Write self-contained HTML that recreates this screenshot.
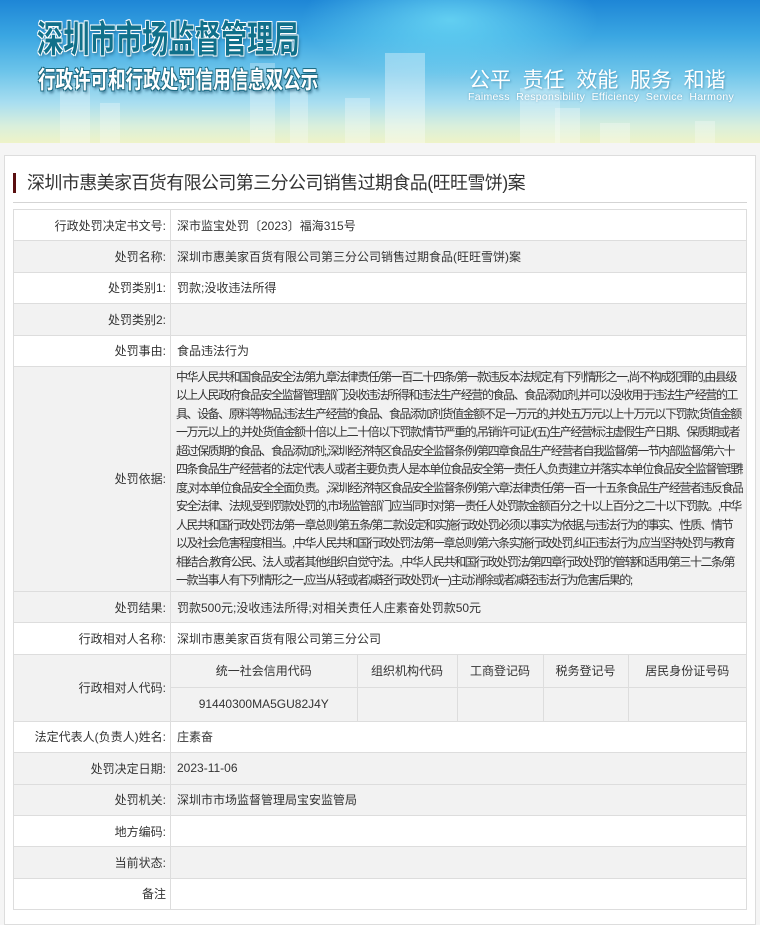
<!DOCTYPE html>
<html><head><meta charset="utf-8">
<style>
*{margin:0;padding:0;box-sizing:border-box}
body{width:760px;height:915px;background:#f5f5f5;font-family:"Liberation Sans","Noto Sans CJK SC",sans-serif;color:#333;overflow:hidden}
.banner{position:absolute;left:0;top:0;width:760px;height:143px;overflow:hidden;
background:linear-gradient(180deg,#1e86d6 0%,#3aa6e2 25%,#6cc4ea 50%,#a9def0 72%,#d9efdc 88%,#eef3c8 100%)}
.glow{position:absolute;left:300px;top:-40px;width:300px;height:120px;border-radius:50%;background:radial-gradient(ellipse,rgba(120,230,250,.7),rgba(120,230,250,0) 70%)}
.bld{position:absolute;bottom:0;background:rgba(255,255,255,.28)}
.t1{position:absolute;left:37px;top:9px;font-size:37px;font-weight:bold;color:#10708a;white-space:nowrap;transform:scaleX(0.71);transform-origin:0 0;
text-shadow:0 0 2px #fff,1px 1px 0 #fff,-1px -1px 0 #fff,1px -1px 0 #fff,-1px 1px 0 #fff,2px 3px 4px rgba(0,60,90,.5)}
.t2{position:absolute;left:38px;top:60px;font-size:24px;font-weight:bold;color:#fff;white-space:nowrap;transform:scaleX(0.73);transform-origin:0 0;
text-shadow:1px 1px 0 #1b6a82,-1px -1px 0 #1b6a82,1px -1px 0 #1b6a82,-1px 1px 0 #1b6a82,2px 3px 3px rgba(0,50,80,.5)}
.s1{position:absolute;left:469px;top:64px;font-size:21px;color:#fff;white-space:pre;text-shadow:1px 1px 2px rgba(0,80,120,.4)}
.s2{position:absolute;left:468px;top:91px;font-size:10.5px;letter-spacing:0.3px;color:#fff;white-space:pre;text-shadow:0 0 2px rgba(0,80,120,.4)}
.card{position:absolute;left:4px;top:155px;width:752px;height:770px;background:#fff;border:1px solid #ddd}
.bar{position:absolute;left:8px;top:17px;width:3px;height:20px;background:#5a0f10}
.title{position:absolute;left:22px;top:15px;font-size:18px;color:#333;letter-spacing:-0.6px;line-height:24px}
.sep{position:absolute;left:8px;top:46px;width:734px;height:1px;background:#d4d4d4}
table.main{position:absolute;left:8px;top:53px;width:734px;border-collapse:collapse;font-size:12px;color:#333;table-layout:fixed}
td{border:1px solid #ddd;height:31.4px;padding:0 6px;vertical-align:middle}
td.l{text-align:right;padding-right:4px}
tr.g td{background:#f2f2f2}
td.long{padding:1px 3px 1px 5px}
.lw{overflow:hidden;white-space:nowrap;line-height:18.5px;letter-spacing:-1.45px}
.inner{width:100%;border-collapse:collapse}
.inner td{border:none;border-right:1px solid #ddd;height:33px;text-align:center;padding:0}
.inner tr:first-child td{border-bottom:1px solid #ddd}
.inner td:last-child{border-right:none}
td.nop{padding:0;height:66px}
</style></head><body>
<div class="banner">
<div class="glow"></div>
<div class="bld" style="left:60px;width:30px;height:60px"></div>
<div class="bld" style="left:100px;width:20px;height:40px"></div>
<div class="bld" style="left:250px;width:25px;height:80px"></div>
<div class="bld" style="left:290px;width:18px;height:55px"></div>
<div class="bld" style="left:385px;width:40px;height:90px;background:rgba(255,255,255,.35)"></div>
<div class="bld" style="left:345px;width:25px;height:45px"></div>
<div class="bld" style="left:520px;width:40px;height:55px"></div>
<div class="bld" style="left:555px;width:25px;height:35px"></div>
<div class="bld" style="left:600px;width:30px;height:20px"></div>
<div class="bld" style="left:695px;width:20px;height:22px"></div>
<div class="t1">深圳市市场监督管理局</div>
<div class="t2">行政许可和行政处罚信用信息双公示</div>
<div class="s1">公平  责任  效能  服务  和谐</div>
<div class="s2">Faimess  Responsibility  Efficiency  Service  Harmony</div>
</div>
<div class="card">
<div class="bar"></div>
<div class="title">深圳市惠美家百货有限公司第三分公司销售过期食品(旺旺雪饼)案</div>
<div class="sep"></div>
<table class="main">
<colgroup><col style="width:157px"><col></colgroup>
<tr><td class="l">行政处罚决定书文号:</td><td>深市监宝处罚〔2023〕福海315号</td></tr>
<tr class="g"><td class="l">处罚名称:</td><td>深圳市惠美家百货有限公司第三分公司销售过期食品(旺旺雪饼)案</td></tr>
<tr><td class="l">处罚类别1:</td><td>罚款;没收违法所得</td></tr>
<tr class="g"><td class="l">处罚类别2:</td><td></td></tr>
<tr><td class="l">处罚事由:</td><td>食品违法行为</td></tr>
<tr class="g"><td class="l">处罚依据:</td><td class="long"><div class="lw">中华人民共和国食品安全法/第九章法律责任/第一百二十四条/第一款违反本法规定,有下列情形之一,尚不构成犯罪的,由县级<br>以上人民政府食品安全监督管理部门没收违法所得和违法生产经营的食品、食品添加剂,并可以没收用于违法生产经营的工<br>具、设备、原料等物品;违法生产经营的食品、食品添加剂货值金额不足一万元的,并处五万元以上十万元以下罚款;货值金额<br>一万元以上的,并处货值金额十倍以上二十倍以下罚款;情节严重的,吊销许可证:/(五)生产经营标注虚假生产日期、保质期或者<br>超过保质期的食品、食品添加剂;,深圳经济特区食品安全监督条例/第四章食品生产经营者自我监督/第一节内部监督/第六十<br>四条食品生产经营者的法定代表人或者主要负责人是本单位食品安全第一责任人,负责建立并落实本单位食品安全监督管理制<br>度,对本单位食品安全全面负责。,深圳经济特区食品安全监督条例/第六章法律责任/第一百一十五条食品生产经营者违反食品<br>安全法律、法规,受到罚款处罚的,市场监管部门应当同时对第一责任人处罚款金额百分之十以上百分之二十以下罚款。,中华<br>人民共和国行政处罚法/第一章总则/第五条/第二款设定和实施行政处罚必须以事实为依据,与违法行为的事实、性质、情节<br>以及社会危害程度相当。,中华人民共和国行政处罚法/第一章总则/第六条实施行政处罚,纠正违法行为,应当坚持处罚与教育<br>相结合,教育公民、法人或者其他组织自觉守法。,中华人民共和国行政处罚法/第四章行政处罚的管辖和适用/第三十二条/第<br>一款当事人有下列情形之一,应当从轻或者减轻行政处罚:/(一)主动消除或者减轻违法行为危害后果的;</div></td></tr>
<tr class="g"><td class="l">处罚结果:</td><td>罚款500元;没收违法所得;对相关责任人庄素奋处罚款50元</td></tr>
<tr><td class="l">行政相对人名称:</td><td>深圳市惠美家百货有限公司第三分公司</td></tr>
<tr class="g"><td class="l">行政相对人代码:</td><td class="nop">
<table class="inner">
<tr><td style="width:186px">统一社会信用代码</td><td style="width:100px">组织机构代码</td><td style="width:86px">工商登记码</td><td style="width:85px">税务登记号</td><td>居民身份证号码</td></tr>
<tr><td>91440300MA5GU82J4Y</td><td></td><td></td><td></td><td></td></tr>
</table></td></tr>
<tr><td class="l">法定代表人(负责人)姓名:</td><td>庄素奋</td></tr>
<tr class="g"><td class="l">处罚决定日期:</td><td>2023-11-06</td></tr>
<tr class="g"><td class="l">处罚机关:</td><td>深圳市市场监督管理局宝安监管局</td></tr>
<tr><td class="l">地方编码:</td><td></td></tr>
<tr class="g"><td class="l">当前状态:</td><td></td></tr>
<tr><td class="l">备注</td><td></td></tr>
</table>
</div>
</body></html>
